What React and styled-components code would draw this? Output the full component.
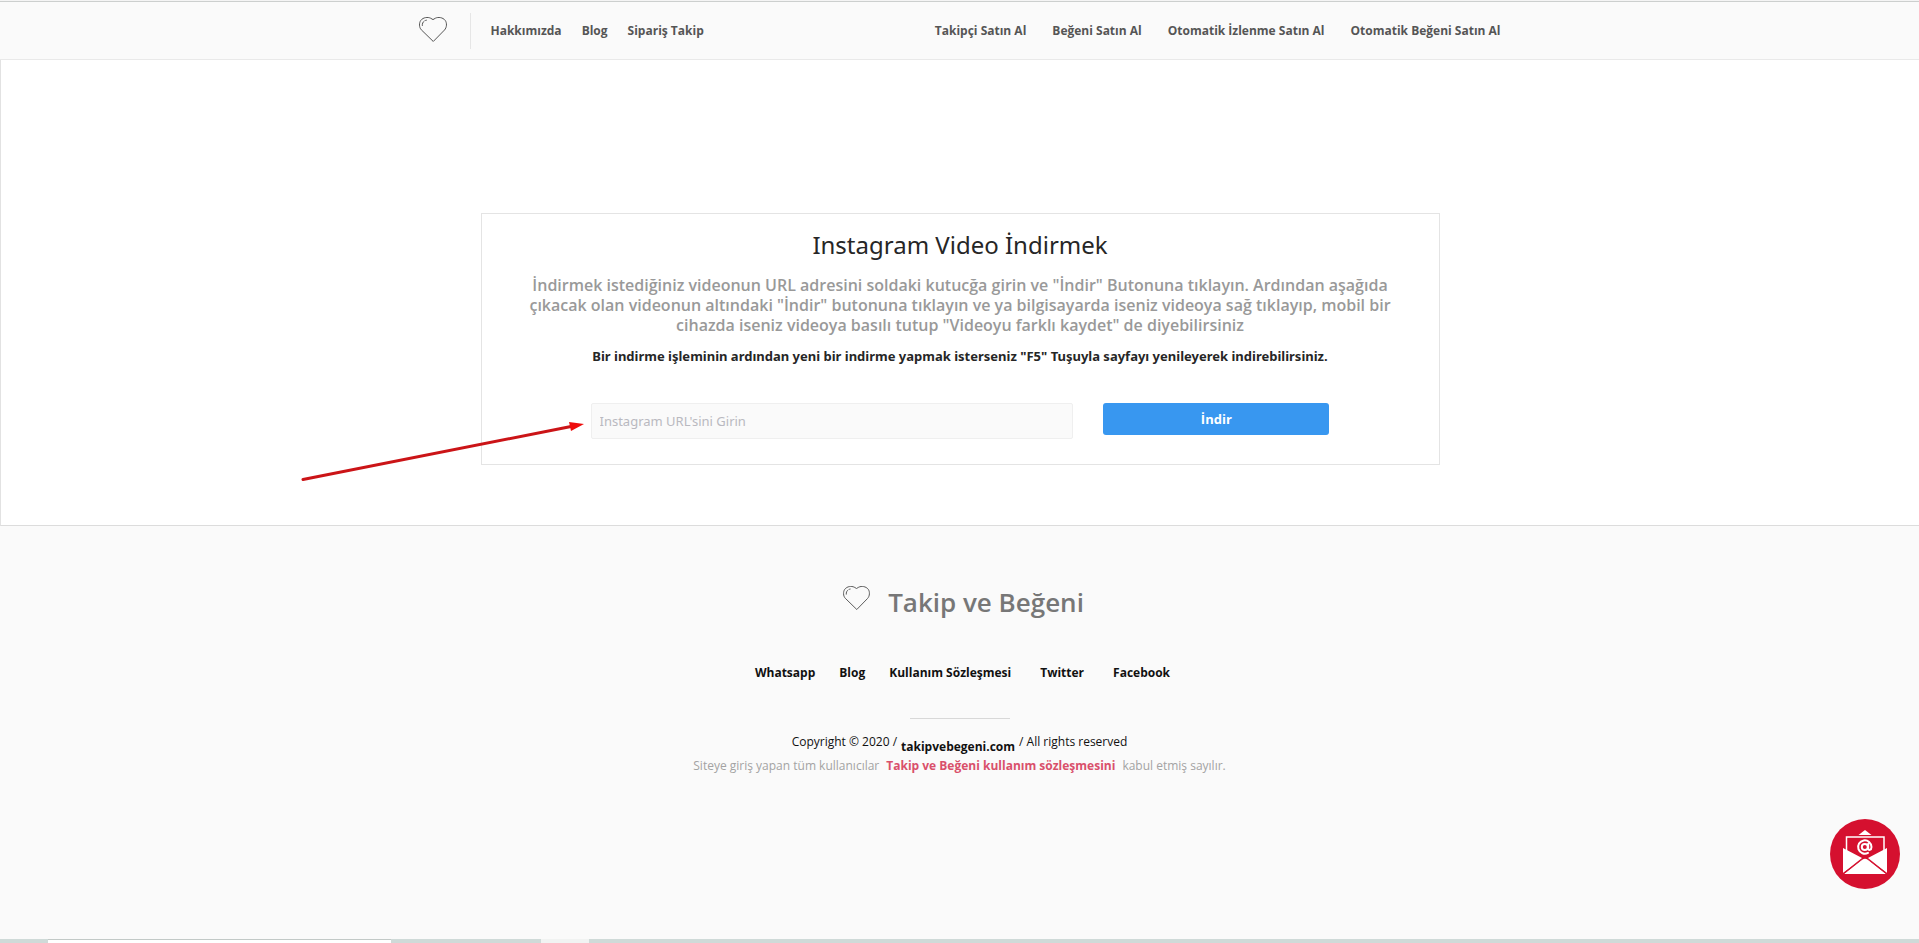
import React from "react";
import styled, { createGlobalStyle } from "styled-components";

const Global = createGlobalStyle`
  *, *::before, *::after { box-sizing: border-box; }
  body { margin: 0; background: #fafafa; font-family: "Open Sans", sans-serif; font-size: 12px; color: #111; }
  h1, h2, p, ul { margin: 0; padding: 0; }
  ul { list-style: none; }
  a { color: inherit; text-decoration: none; }
`;

const Page = styled.div`
  min-height: 100vh;
  display: flex;
  flex-direction: column;
  border-top: 1px solid #f4f4f4;
`;

const Header = styled.header`
  border-top: 1px solid #cccfce;
  border-bottom: 1px solid #e9e9e9;
  background: #fafafa;
`;

const HeaderInner = styled.div`
  max-width: 1082px;
  height: 57px;
  margin: 0 auto;
  display: flex;
  align-items: center;
`;

const LogoLink = styled.a`
  display: flex;
  align-items: flex-start;
  height: 36px;
  padding: 4px 23px 0 0;
  margin-right: 20px;
  border-right: 1px solid #e6e6e6;
`;

const NavList = styled.ul`
  display: flex;
  gap: ${(p) => p.$gap}px;
  margin-left: ${(p) => (p.$end ? "auto" : "0")};
`;

const NavLink = styled.a`
  font-weight: 700;
  line-height: 18px;
  color: #555;
  white-space: nowrap;
`;

const Main = styled.main`
  padding: 153px 20px 60px;
  background: #fff;
  border-left: 1px solid #e2e2e2;
  border-bottom: 1px solid #dcdcdc;
`;

const Card = styled.section`
  position: relative;
  max-width: 959px;
  margin: 0 auto;
  padding: 14px 30px 25px;
  border: 1px solid #e4e4e4;
  text-align: center;
`;

const Title = styled.h1`
  font: 400 24px/34px "Noto Sans", sans-serif;
  color: #262626;
`;

const Lead = styled.p`
  margin-top: 13px;
  font: 600 16px/20px "Open Sans", sans-serif;
  color: #999;
`;

const Note = styled.p`
  margin-top: 10px;
  font: 700 13px/22px "Noto Sans", sans-serif;
  color: #262626;
`;

const Form = styled.form`
  display: grid;
  grid-template-columns: 482fr 226fr;
  align-items: start;
  gap: 30px;
  margin-top: 36px;
  padding: 0 79px;
`;

const UrlInput = styled.input`
  width: 100%;
  height: 36px;
  padding: 0 8px;
  border: 1px solid #efefef;
  border-radius: 2px;
  background: #fafafa;
  font: 400 13px/20px "Noto Sans", sans-serif;
  color: #262626;
  &::placeholder { color: #b9b9c0; opacity: 1; }
`;

const SubmitButton = styled.button`
  height: 32px;
  padding: 0;
  border: 0;
  border-radius: 3px;
  background: #3897f0;
  color: #fff;
  font: 700 13px/20px "Open Sans", sans-serif;
  cursor: pointer;
`;

const Arrow = styled.svg`
  position: absolute;
  left: -182px;
  top: 204px;
  pointer-events: none;
`;

const Footer = styled.footer`
  flex: 1;
  display: flex;
  flex-direction: column;
  align-items: center;
  padding: 56px 20px;
`;

const Brand = styled.div`
  display: flex;
  align-items: center;
  gap: 18px;
  padding: 2px 0 0 8px;

  svg { margin-bottom: 8px; }
`;

const BrandName = styled.h2`
  font-weight: 600;
  font-size: 26px;
  line-height: 36px;
  color: #777;
`;

const FooterLinks = styled.ul`
  display: flex;
  margin-top: 44px;
  padding-left: 6px;
  gap: 24px;
`;

const FooterItem = styled.li`
  padding-right: ${(p) => (p.$wide ? 5 : 0)}px;
`;

const StrongLink = styled.a`
  font-weight: 700;
  line-height: 18px;
  color: ${(p) => p.$color || "#111"};
`;

const Divider = styled.hr`
  width: 100px;
  height: 1px;
  margin: 36px 0 14px;
  border: 0;
  background: #d8d8d8;
`;

const Copyright = styled.p`
  display: flex;
  gap: 4px;
  line-height: 18px;
`;

const DomainLink = styled(StrongLink)`
  padding-top: 5px;
`;

const Terms = styled.p`
  display: flex;
  gap: 7px;
  margin-top: 1px;
  line-height: 18px;
  color: #a3a3a3;
`;

const MailButton = styled.a`
  position: fixed;
  right: 19px;
  bottom: 54px;
  width: 70px;
  height: 70px;
`;

const BottomBar = styled.div`
  display: flex;
  height: 4px;
  background: #cfdad8;
`;

const BarTab = styled.div`
  width: ${(p) => p.$width}px;
  margin-left: ${(p) => p.$before}px;
  background: ${(p) => p.$color};
  border-top: 1px solid ${(p) => p.$edge};
`;

function Heart({ width, height }) {
  return (
    <svg width={width} height={height} viewBox="0 0 28 25" fill="none" stroke="#555" strokeWidth="1" strokeLinecap="round" strokeLinejoin="round" aria-hidden="true">
      <path d="M14 24.200 2.300 12.800C0 10.400 0 5.800 1.800 3.400 4.200.3 8.800-.2 11.600 1.200L14 2.600 16.400 1.200C19.200-.2 23.800.3 26.200 3.400 28 5.800 28 10.400 25.700 12.800Z" />
      <path d="M3.300 8.500C3.100 5.700 4.700 3.700 7.400 3.200" strokeDasharray="5 1.500" />
    </svg>
  );
}

function MailIcon() {
  return (
    <svg width="70" height="70" viewBox="0 0 70 70" aria-hidden="true">
      <circle cx="35" cy="35" r="35" fill="#d5102f" />
      <path d="M28.500 16 35 11 41.500 16Z" fill="#fff" />
      <path d="M16.500 33V18H54V33" fill="none" stroke="#fff" strokeWidth="1.500" />
      <path d="M13 29 33 39.500 13 54ZM57 29 37 39.500 57 54Z" fill="#fff" />
      <path d="M14 55 32.500 40.500Q35 38.800 37.500 40.500L56 55Z" fill="#fff" />
      <path d="M13.500 54.500 33 39M56.500 54.500 37 39" stroke="#d5102f" strokeWidth="1.200" />
      <g fill="none" stroke="#fff" strokeWidth="2" strokeLinecap="round">
        <circle cx="34.800" cy="28" r="3" />
        <path d="M38.200 24.800V29.500C38.200 32 41.500 31.300 41.500 28A6.700 6.700 0 1 0 38 33.900" />
      </g>
    </svg>
  );
}

const mainLinks = ["Hakkımızda", "Blog", "Sipariş Takip"];
const shopLinks = ["Takipçi Satın Al", "Beğeni Satın Al", "Otomatik İzlenme Satın Al", "Otomatik Beğeni Satın Al"];
const footerLinks = [
  { label: "Whatsapp" },
  { label: "Blog" },
  { label: "Kullanım Sözleşmesi", wide: true },
  { label: "Twitter", wide: true },
  { label: "Facebook" },
];

function Nav({ label, links, gap, end }) {
  return (
    <NavList aria-label={label} $gap={gap} $end={end}>
      {links.map((text) => (
        <li key={text}><NavLink href="#">{text}</NavLink></li>
      ))}
    </NavList>
  );
}

export default function App() {
  return (
    <Page>
      <Global />
      <Header>
        <HeaderInner>
          <LogoLink href="#" aria-label="Takip ve Beğeni"><Heart width={28} height={25} /></LogoLink>
          <Nav label="Site" links={mainLinks} gap={20} />
          <Nav label="Hizmetler" links={shopLinks} gap={26} end />
        </HeaderInner>
      </Header>

      <Main>
        <Card>
          <Title>Instagram Video İndirmek</Title>
          <Lead>
            İndirmek istediğiniz videonun URL adresini soldaki kutucğa girin ve "İndir" Butonuna tıklayın. Ardından aşağıda
            çıkacak olan videonun altındaki "İndir" butonuna tıklayın ve ya bilgisayarda iseniz videoya sağ tıklayıp, mobil bir
            cihazda iseniz videoya basılı tutup "Videoyu farklı kaydet" de diyebilirsiniz
          </Lead>
          <Note>Bir indirme işleminin ardından yeni bir indirme yapmak isterseniz "F5" Tuşuyla sayfayı yenileyerek indirebilirsiniz.</Note>
          <Form onSubmit={(e) => e.preventDefault()}>
            <UrlInput type="text" aria-label="Instagram URL'si" placeholder="Instagram URL'sini Girin" />
            <SubmitButton type="submit">İndir</SubmitButton>
          </Form>
          <Arrow width="286" height="66" viewBox="0 0 286 66" aria-hidden="true">
            <path d="M3 61.500 271 8.500" stroke="#cb1417" strokeWidth="3" strokeLinecap="round" />
            <path d="M269 4 284 6 271 13Z" fill="#ee0c0c" />
          </Arrow>
        </Card>
      </Main>

      <Footer>
        <Brand>
          <Heart width={27} height={24} />
          <BrandName>Takip ve Beğeni</BrandName>
        </Brand>
        <FooterLinks>
          {footerLinks.map(({ label, wide }) => (
            <FooterItem key={label} $wide={wide}><StrongLink href="#">{label}</StrongLink></FooterItem>
          ))}
        </FooterLinks>
        <Divider />
        <Copyright>
          <span>Copyright © 2020 /</span>
          <DomainLink href="#">takipvebegeni.com</DomainLink>
          <span>/ All rights reserved</span>
        </Copyright>
        <Terms>
          <span>Siteye giriş yapan tüm kullanıcılar</span>
          <StrongLink href="#" $color="#d9506b">Takip ve Beğeni kullanım sözleşmesini</StrongLink>
          <span>kabul etmiş sayılır.</span>
        </Terms>
      </Footer>

      <BottomBar>
        <BarTab $before={48} $width={343} $color="#fff" $edge="#c2c9c7" />
        <BarTab $before={150} $width={48} $color="#f1f3f2" $edge="#f1f3f2" />
      </BottomBar>

      <MailButton href="#" aria-label="E-posta gönder"><MailIcon /></MailButton>
    </Page>
  );
}
